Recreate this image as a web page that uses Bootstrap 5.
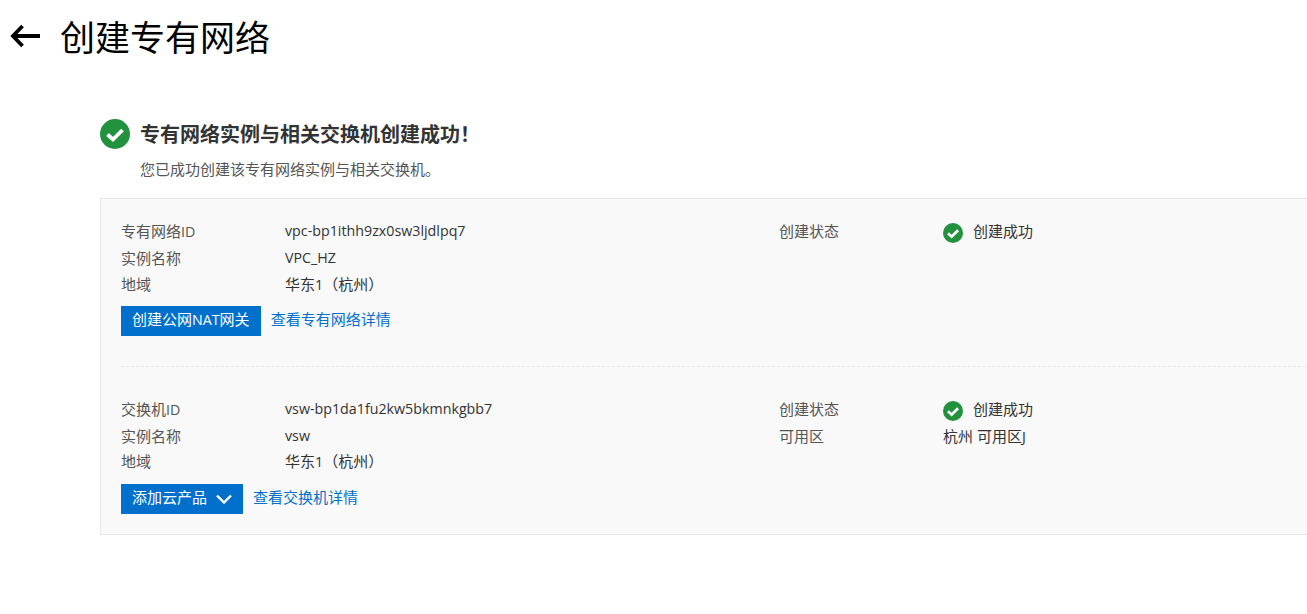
<!DOCTYPE html>
<html lang="zh-CN">
<head>
<meta charset="utf-8">
<title>创建专有网络</title>
<link rel="stylesheet" href="https://cdn.jsdelivr.net/npm/bootstrap@5.3.0/dist/css/bootstrap.min.css">
<style>
html,body{overflow:hidden;height:100%}
body{font-family:"Open Sans","Noto Sans CJK SC",sans-serif;font-size:15px;color:#333;background:#fff;line-height:20px}
.lat{font-size:14.25px}
.page-head{height:72px;padding-left:10px;gap:20px}
.page-title{font-size:35px;font-weight:400;line-height:72px;margin:0;color:#000;font-family:"Noto Sans CJK SC",sans-serif}
.result-wrap{margin:47px -60px 0 100px}
.result-head{gap:10px;height:30px}
.result-title{font-size:20px;font-weight:700;line-height:30px;margin:0;color:#333;font-family:"Noto Sans CJK SC",sans-serif}
.result-sub{margin:9px 0 0 40px;line-height:22px;color:#555}
.info-panel{margin-top:18px;background:#f9f9f9;border:1px solid #e7e7e7;padding:20px}
.info-block+.info-block{border-top:1px dashed #e8e8e8;margin-top:30px;padding-top:30px}
.info-line{min-height:26px;align-items:center}
.info-line:first-child,.info-block+.info-block .info-line:nth-child(3){padding-bottom:2px}
.info-half{width:658px;flex:none}
.info-key{width:164px;flex:none;color:#555}
.info-val{color:#333}
.status-ok{gap:10px}
.status-ok svg{margin-top:4px}
.act-line{margin-top:9px;gap:10px}
.act-btn{--bs-btn-bg:#0070cc;--bs-btn-border-color:#0070cc;--bs-btn-color:#fff;--bs-btn-hover-bg:#0070cc;--bs-btn-hover-border-color:#0070cc;--bs-btn-hover-color:#fff;--bs-btn-padding-x:10px;--bs-btn-font-size:15px;--bs-btn-line-height:20px;--bs-btn-border-radius:0;height:30px;padding-top:0;padding-bottom:4px}
.act-btn-drop{gap:9px}
.act-link{color:#0070cc;text-decoration:none;margin-top:-5px}
</style>
</head>
<body>
<header class="page-head d-flex align-items-center">
  <svg width="30" height="24" viewBox="0 0 30 24" aria-hidden="true"><path d="M30 12H3M12.500 2 3 12l9.500 10" fill="none" stroke="#000" stroke-width="3.800"/></svg>
  <h1 class="page-title">创建专有网络</h1>
</header>
<main class="result-wrap">
  <div class="result-head d-flex align-items-center">
    <svg width="30" height="30" viewBox="0 0 30 30" aria-hidden="true"><circle cx="15" cy="15" r="15" fill="#23923f"/><path d="M7.500 15.500 13 20.500 22.500 11" fill="none" stroke="#fff" stroke-width="3.800"/></svg>
    <h2 class="result-title">专有网络实例与相关交换机创建成功！</h2>
  </div>
  <p class="result-sub">您已成功创建该专有网络实例与相关交换机。</p>
  <section class="info-panel">
    <div class="info-block">
      <div class="d-flex info-line">
        <div class="d-flex info-half"><span class="info-key">专有网络<span class="lat">ID</span></span><span class="info-val lat">vpc-bp1ithh9zx0sw3ljdlpq7</span></div>
        <div class="d-flex info-half align-items-center"><span class="info-key">创建状态</span>
          <span class="d-flex align-items-center status-ok info-val"><svg width="20" height="20" viewBox="0 0 30 30" aria-hidden="true"><circle cx="15" cy="15" r="15" fill="#23923f"/><path d="M7.500 15.500 13 20.500 22.500 11" fill="none" stroke="#fff" stroke-width="4.200"/></svg>创建成功</span></div>
      </div>
      <div class="d-flex info-line"><div class="d-flex info-half"><span class="info-key">实例名称</span><span class="info-val lat">VPC_HZ</span></div></div>
      <div class="d-flex info-line"><div class="d-flex info-half"><span class="info-key">地域</span><span class="info-val">华东<span class="lat">1</span>（杭州）</span></div></div>
      <div class="d-flex align-items-center act-line">
        <button type="button" class="btn act-btn">创建公网<span class="lat">NAT</span>网关</button>
        <a href="#" class="act-link">查看专有网络详情</a>
      </div>
    </div>
    <div class="info-block">
      <div class="d-flex info-line">
        <div class="d-flex info-half"><span class="info-key">交换机<span class="lat">ID</span></span><span class="info-val lat">vsw-bp1da1fu2kw5bkmnkgbb7</span></div>
        <div class="d-flex info-half align-items-center"><span class="info-key">创建状态</span>
          <span class="d-flex align-items-center status-ok info-val"><svg width="20" height="20" viewBox="0 0 30 30" aria-hidden="true"><circle cx="15" cy="15" r="15" fill="#23923f"/><path d="M7.500 15.500 13 20.500 22.500 11" fill="none" stroke="#fff" stroke-width="4.200"/></svg>创建成功</span></div>
      </div>
      <div class="d-flex info-line">
        <div class="d-flex info-half"><span class="info-key">实例名称</span><span class="info-val lat">vsw</span></div>
        <div class="d-flex info-half"><span class="info-key">可用区</span><span class="info-val">杭州 可用区<span class="lat">J</span></span></div>
      </div>
      <div class="d-flex info-line"><div class="d-flex info-half"><span class="info-key">地域</span><span class="info-val">华东<span class="lat">1</span>（杭州）</span></div></div>
      <div class="d-flex align-items-center act-line">
        <button type="button" class="btn act-btn act-btn-drop d-inline-flex align-items-center">添加云产品
          <svg width="16" height="10" viewBox="0 0 16 10" class="mt-1" aria-hidden="true"><path d="M1 1.500 8 8.500l7-7" fill="none" stroke="#fff" stroke-width="2.400"/></svg></button>
        <a href="#" class="act-link">查看交换机详情</a>
      </div>
    </div>
  </section>
</main>
<script src="https://cdn.jsdelivr.net/npm/bootstrap@5.3.0/dist/js/bootstrap.bundle.min.js"></script>
</body>
</html>
